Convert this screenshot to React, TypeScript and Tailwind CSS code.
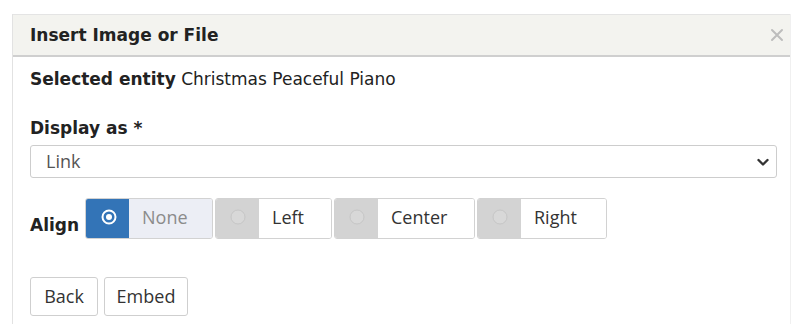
import React from "react";

const verdana = { fontFamily: '"DejaVu Sans", Verdana, sans-serif' };
const openSans = { fontFamily: '"Open Sans", "Noto Sans", sans-serif' };

function Radio({ active }: { active: boolean }) {
  if (active) {
    return (
      <svg width="18" height="18" viewBox="0 0 18 18">
        <circle cx="9" cy="9" r="6.5" fill="none" stroke="#ffffff" strokeWidth="2" />
        <circle cx="9" cy="9" r="3" fill="#ffffff" />
      </svg>
    );
  }
  return (
    <svg width="18" height="18" viewBox="0 0 18 18">
      <circle cx="9" cy="9" r="7" fill="#d8d8d8" stroke="#c6c6c6" strokeWidth="1" />
    </svg>
  );
}

function AlignOption({
  label,
  active,
  labelWidth,
}: {
  label: string;
  active?: boolean;
  labelWidth: string;
}) {
  return (
    <div className="flex h-[41px] rounded-[3px] border border-[#d2d2d2] overflow-hidden">
      <div
        className={
          active
            ? "flex w-[43px] items-center justify-center bg-[#3374b7] pb-[4px] pl-[2px]"
            : "flex w-[43px] items-center justify-center bg-[#d3d3d3] pb-[4px]"
        }
      >
        <Radio active={!!active} />
      </div>
      <div
        className={
          active
            ? `flex ${labelWidth} items-center pl-[13px] bg-[#eceef5] text-[#8b8b8b] text-[18px] pb-[2px]`
            : `flex ${labelWidth} items-center pl-[13px] bg-white text-[#333] text-[18px] pb-[2px]`
        }
        style={openSans}
      >
        {label}
      </div>
    </div>
  );
}

export default function App() {
  return (
    <div className="w-[800px] h-[328px] bg-white overflow-hidden">
      <div className="ml-[12px] mt-[14px] w-[779px] h-[310px] border-l border-[#e2e2e2] border-r border-r-[#f0f0f0]">
        <div className="flex h-[43px] items-center justify-between border-t border-[#e4e4e4] border-b-2 border-b-[#cfcfcf] bg-[#f3f3ef] pl-[17px] pr-[6px]">
          <span className="text-[17px] leading-[20px] font-bold text-[#222]" style={verdana}>
            Insert Image or File
          </span>
          <svg width="14" height="14" viewBox="0 0 14 14" className="mb-[1px]">
            <path d="M2 2 L12 12 M12 2 L2 12" stroke="#bdbdbd" strokeWidth="2" strokeLinecap="round" />
          </svg>
        </div>
        <div className="pl-[17px] pr-[15px]">
          <div className="mt-[12px] text-[17px] leading-[20px] text-[#222]" style={verdana}>
            <span className="font-bold">Selected entity</span>{" "}
            <span>Christmas Peaceful Piano</span>
          </div>
          <div className="mt-[29px] text-[17px] leading-[20px] font-bold text-[#222]" style={verdana}>
            Display as *
          </div>
          <div className="mt-[7px] flex h-[33px] w-[747px] items-center justify-between rounded-[3px] border border-[#cdcdcd] pl-[15px] pr-[6px]">
            <span className="text-[18px] text-[#555] pb-[1px]" style={openSans}>
              Link
            </span>
            <svg width="14" height="14" viewBox="0 0 14 14">
              <path d="M2.5 5 L7 9.5 L11.5 5" fill="none" stroke="#333" strokeWidth="2.4" strokeLinecap="round" strokeLinejoin="round" />
            </svg>
          </div>
          <div className="mt-[20px] flex items-end">
            <span className="pb-[2px] text-[17px] leading-[24px] font-bold text-[#222] w-[55px]" style={verdana}>
              Align
            </span>
            <div className="flex gap-[2px]">
              <AlignOption label="None" active labelWidth="w-[83px]" />
              <AlignOption label="Left" labelWidth="w-[72px]" />
              <AlignOption label="Center" labelWidth="w-[96px]" />
              <AlignOption label="Right" labelWidth="w-[85px]" />
            </div>
          </div>
          <div className="mt-[38px] flex gap-[6px]" style={openSans}>
            <button className="h-[39px] w-[68px] rounded-[3px] border border-[#cfcfcf] bg-white text-[18px] text-[#333]">
              Back
            </button>
            <button className="h-[39px] w-[84px] rounded-[3px] border border-[#cfcfcf] bg-white text-[18px] text-[#333]">
              Embed
            </button>
          </div>
        </div>
      </div>
    </div>
  );
}
